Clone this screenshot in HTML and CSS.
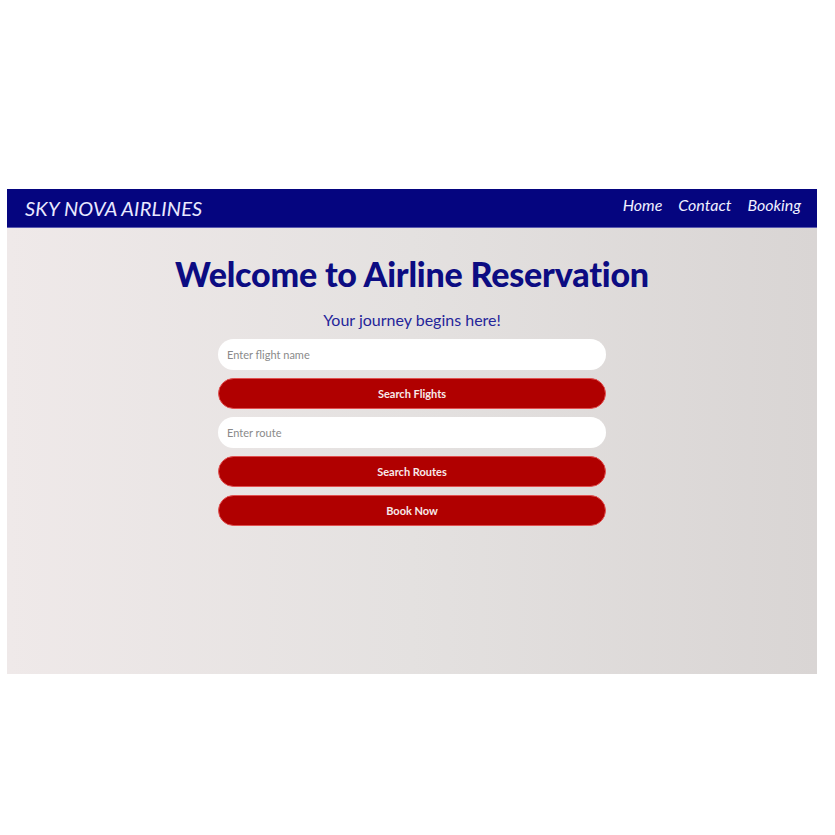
FILE: index.html
```html
<!DOCTYPE html>
<html lang="en">
<head>
<meta charset="utf-8">
<title>Sky Nova Airlines</title>
<link rel="stylesheet" href="styles.css">
</head>
<body>
<div class="frame">
  <header class="navbar">
    <div class="brand">SKY NOVA AIRLINES</div>
    <nav class="links">
      <a href="#">Home</a>
      <a href="#">Contact</a>
      <a href="#">Booking</a>
    </nav>
  </header>
  <main class="content">
    <h1 class="title">Welcome to Airline Reservation</h1>
    <p class="subtitle">Your journey begins here!</p>
    <div class="form">
      <input class="field" type="text" placeholder="Enter flight name">
      <button class="btn">Search Flights</button>
      <input class="field" type="text" placeholder="Enter route">
      <button class="btn">Search Routes</button>
      <button class="btn">Book Now</button>
    </div>
  </main>
</div>
</body>
</html>
```
FILE: styles.css
```css
html, body {
  margin: 0;
  padding: 0;
  background: #ffffff;
}
body {
  font-family: "Lato", "Inter", sans-serif;
}
.frame {
  margin: 189px 0 0 7px;
  width: 810px;
  height: 485px;
  background: linear-gradient(90deg, #efe9e9 0%, #e4e1e0 50%, #d9d5d4 100%);
  display: flex;
  flex-direction: column;
}
.navbar {
  height: 39px;
  background: #05057f;
  display: flex;
  align-items: center;
  justify-content: space-between;
  padding: 0 16px 0 18px;
  border-bottom: 1px solid #5a5ab0;
  box-sizing: border-box;
}
.brand {
  color: #e9e9ff;
  font-style: italic;
  font-size: 20px;
  letter-spacing: 0.2px;
  margin-top: -1px;
}
.links {
  display: flex;
  gap: 16px;
  margin-top: -8px;
}
.links a {
  color: #f0f0ff;
  text-decoration: none;
  font-style: italic;
  font-size: 16px;
}
.content {
  display: flex;
  flex-direction: column;
  align-items: center;
}
.title {
  margin: 26px 0 0;
  font-size: 34px;
  font-weight: 900;
  color: #0c0c82;
  letter-spacing: -0.2px;
  line-height: 40px;
}
.subtitle {
  margin: 16px 0 0;
  font-size: 16px;
  color: #25259a;
  line-height: 20px;
}
.form {
  margin-top: 9px;
  width: 388px;
  display: flex;
  flex-direction: column;
  gap: 8px;
}
.field, .btn {
  height: 31px;
  border-radius: 16px;
  box-sizing: border-box;
  font-family: "Lato", "Inter", sans-serif;
  font-size: 11px;
}
.field {
  border: none;
  background: #ffffff;
  padding: 0 9px;
  color: #333;
  outline: none;
}
.field::placeholder {
  color: #8a8a8a;
}
.btn {
  border: 1px solid #e05050;
  background: #b00000;
  color: #f7eaea;
  font-weight: 700;
  cursor: pointer;
}
```
